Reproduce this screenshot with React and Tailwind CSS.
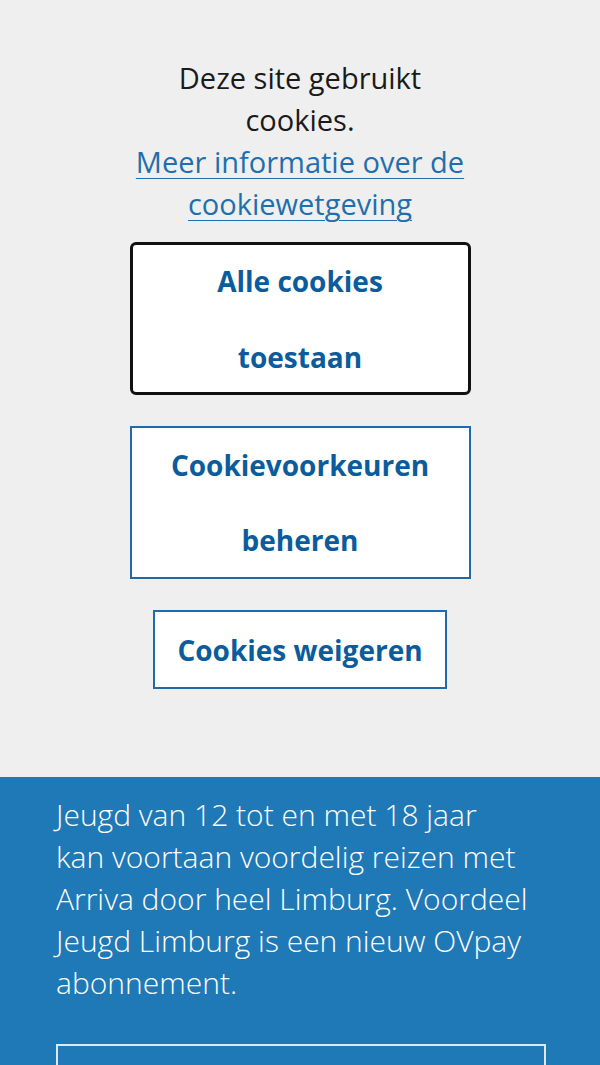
export default function App() {
  return (
    <div className="min-h-[1065px] bg-[#efefef] font-['Open_Sans','Lato',sans-serif] overflow-hidden">
      {/* Cookie banner */}
      <div className="flex flex-col items-center pt-[57px] pb-[88px]">
        <div className="w-[360px] text-center text-[29px] leading-[42px] text-[#1a1a1a]">
          <p>
            <span className="block">Deze site gebruikt</span>
            <span className="block">cookies.</span>
          </p>
          <a href="#" className="block text-[#1f6fae] underline underline-offset-[5px] decoration-1">
            <span className="block">Meer informatie over de</span>
            <span className="block">cookiewetgeving</span>
          </a>
        </div>

        <div className="mt-[17px] flex flex-col items-center gap-[31px]">
          <button className="flex w-[341px] h-[153px] flex-col items-center justify-center gap-[46px] rounded-[6px] border-[3px] border-[#111] bg-white text-[28px] font-bold leading-[30px] text-[#0b5c9c]">
            <span>Alle cookies</span>
            <span>toestaan</span>
          </button>
          <button className="flex w-[341px] h-[153px] flex-col items-center justify-center gap-[45px] border-2 border-[#1f6aa8] bg-white text-[28px] font-bold leading-[30px] text-[#0b5c9c]">
            <span>Cookievoorkeuren</span>
            <span>beheren</span>
          </button>
          <button className="h-[79px] border-2 border-[#1f6aa8] bg-white px-[22px] text-[28px] font-bold text-[#0b5c9c]">
            Cookies weigeren
          </button>
        </div>
      </div>

      {/* News band */}
      <div className="bg-[#1f79b6] px-[56px] pt-[17px] pb-10 text-white">
        <p className="text-[30px] leading-[42px] font-light">
          <span className="block">Jeugd van 12 tot en met 18 jaar</span>
          <span className="block">kan voortaan voordelig reizen met</span>
          <span className="block">Arriva door heel Limburg. Voordeel</span>
          <span className="block">Jeugd Limburg is een nieuw OVpay</span>
          <span className="block">abonnement.</span>
        </p>
        <div className="mt-[40px] h-[80px] w-[490px] border-2 border-[#d7ecf8]" />
      </div>
    </div>
  );
}
